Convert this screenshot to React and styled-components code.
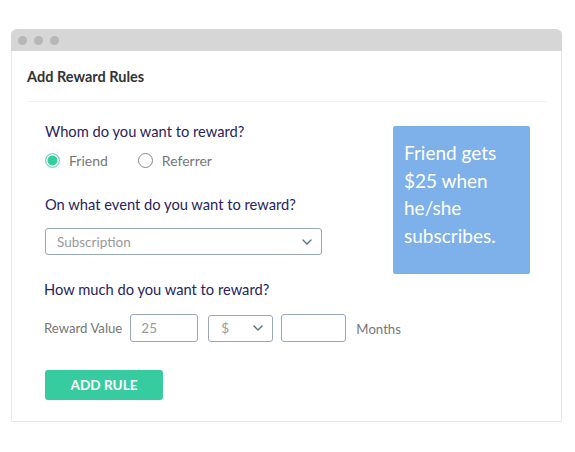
import React from "react";
import styled, { createGlobalStyle } from "styled-components";

const GlobalStyle = createGlobalStyle`
  body {
    margin: 0;
    background: #ffffff;
    font-family: "Lato", "Liberation Sans", sans-serif;
  }
`;

const Page = styled.div`
  padding: 29px 0 0 11px;
`;

const Window = styled.div`
  width: 551px;
  height: 393px;
  box-sizing: border-box;
  border: 1px solid #e8e8e8;
  border-top: none;
  border-radius: 6px 6px 0 0;
  background: #fff;
  display: flex;
  flex-direction: column;
`;

const TitleBar = styled.div`
  height: 22px;
  margin: 0 -1px;
  background: #d6d6d6;
  border-radius: 6px 6px 0 0;
  display: flex;
  align-items: center;
  gap: 7px;
  padding-left: 7px;
`;

const Dot = styled.span`
  width: 9px;
  height: 9px;
  border-radius: 50%;
  background: #b7b7b7;
`;

const Header = styled.div`
  margin: 0 14px 0 15px;
  height: 50px;
  display: flex;
  align-items: center;
  border-bottom: 1px solid #eef2f2;
  font-size: 14.5px;
  font-weight: 700;
  color: #333;
`;

const Content = styled.div`
  display: flex;
  align-items: flex-start;
  padding: 19px 0 0 33px;
`;

const Form = styled.div`
  width: 348px;
  display: flex;
  flex-direction: column;
  flex-shrink: 0;
`;

const Question = styled.div`
  font-size: 14.7px;
  line-height: 20px;
  color: #28245e;
  margin-top: ${(p) => p.$top || 0}px;
  margin-left: ${(p) => p.$shift || 0}px;
`;

const RadioRow = styled.div`
  display: flex;
  align-items: center;
  height: 20px;
  margin-top: 9px;
  gap: 30px;
`;

const RadioOption = styled.label`
  display: flex;
  align-items: center;
  gap: 9px;
  font-size: 14px;
  color: #777;
`;

const RadioDot = styled.span`
  width: 15px;
  height: 15px;
  box-sizing: border-box;
  border-radius: 50%;
  border: 1px solid ${(p) => (p.$checked ? "#7fdcbd" : "#888")};
  background: ${(p) => (p.$checked ? "#36cca0" : "#fff")};
  box-shadow: ${(p) => (p.$checked ? "inset 0 0 0 1.5px #fff" : "none")};
`;

const Select = styled.div`
  width: ${(p) => p.$width}px;
  height: 27px;
  flex-shrink: 0;
  box-sizing: border-box;
  border: 1px solid #9aa6ba;
  border-radius: 3px;
  display: flex;
  align-items: center;
  justify-content: space-between;
  padding: 0 9px 0 ${(p) => p.$pad}px;
  font-size: 13.5px;
  color: #9a9a9a;
  margin-top: ${(p) => p.$top || 0}px;
`;

const Input = styled.div`
  width: ${(p) => p.$width}px;
  height: 28px;
  flex-shrink: 0;
  box-sizing: border-box;
  border: 1px solid #9aa6ba;
  border-radius: 3px;
  display: flex;
  align-items: center;
  padding-left: 10px;
  font-size: 13.5px;
  color: #9a9a9a;
`;

const ValueRow = styled.div`
  display: flex;
  align-items: center;
  margin-top: 15px;
  margin-left: -1px;
  font-size: 13.2px;
  color: #777;
  white-space: nowrap;
`;

const Label = styled.span`
  margin: ${(p) => p.$margin};
  padding-top: ${(p) => p.$drop || 0}px;
  flex-shrink: 0;
`;

const Button = styled.button`
  margin-top: 28px;
  width: 118px;
  height: 30px;
  border: none;
  border-radius: 3px;
  background: #36cca0;
  color: #fff;
  font-family: "Lato", "Liberation Sans", sans-serif;
  font-size: 13.6px;
  font-weight: 700;
  padding: 0;
`;

const Note = styled.div`
  width: 137px;
  height: 148px;
  flex-shrink: 0;
  box-sizing: border-box;
  margin-top: 5px;
  padding: 13px 6px 0 11px;
  background: #7eb0ea;
  border-radius: 2px;
  color: #fff;
  font-size: 19px;
  line-height: 27.5px;
`;

function Chevron() {
  return (
    <svg width="10" height="6" viewBox="0 0 10 6">
      <path d="M1 1l4 4 4-4" fill="none" stroke="#5f6f8f" strokeWidth="1.4" strokeLinecap="round" strokeLinejoin="round" />
    </svg>
  );
}

export default function App() {
  return (
    <>
      <GlobalStyle />
      <Page>
        <Window>
          <TitleBar>
            <Dot />
            <Dot />
            <Dot />
          </TitleBar>
          <Header>Add Reward Rules</Header>
          <Content>
            <Form>
              <Question>Whom do you want to reward?</Question>
              <RadioRow>
                <RadioOption>
                  <RadioDot $checked />
                  Friend
                </RadioOption>
                <RadioOption>
                  <RadioDot />
                  Referrer
                </RadioOption>
              </RadioRow>
              <Question $top={24}>On what event do you want to reward?</Question>
              <Select $width={277} $pad={11} $top={14}>
                Subscription
                <Chevron />
              </Select>
              <Question $top={24} $shift={-1}>How much do you want to reward?</Question>
              <ValueRow>
                <Label $margin="0 8px 0 0">Reward Value</Label>
                <Input $width={68}>25</Input>
                <Label $margin="0 10px 0 0" />
                <Select $width={65} $pad={12}>
                  $
                  <Chevron />
                </Select>
                <Label $margin="0 8px 0 0" />
                <Input $width={65} />
                <Label $margin="0 0 0 10px" $drop={2}>Months</Label>
              </ValueRow>
              <Button>ADD RULE</Button>
            </Form>
            <Note>Friend gets $25 when he/she subscribes.</Note>
          </Content>
        </Window>
      </Page>
    </>
  );
}
